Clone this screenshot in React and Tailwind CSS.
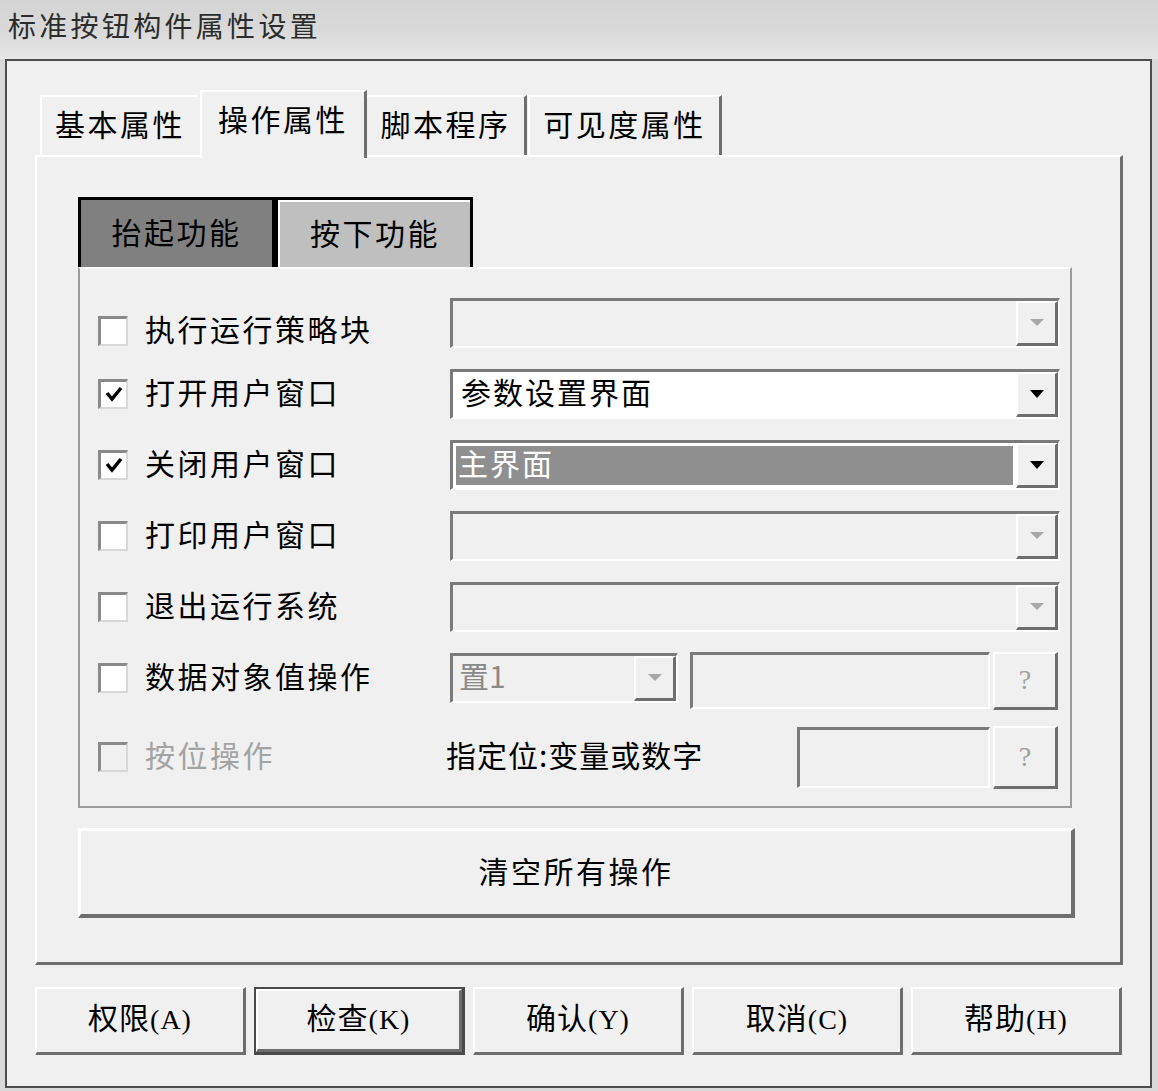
import React from "react";

const RAISED =
  "border-t-2 border-l-2 border-t-white border-l-white border-r-[3px] border-b-[3px] border-r-[#6e6e6e] border-b-[#6e6e6e]";
const SUNKEN =
  "border-t-[3px] border-l-[3px] border-t-[#7a7a7a] border-l-[#7a7a7a] border-r-2 border-b-2 border-r-white border-b-white";
const T = "text-[30px] leading-none relative -top-[3px]";

function Arrow({ disabled }) {
  return (
    <div className={`w-[42px] h-full bg-[#f0f0f0] flex items-center justify-center ${RAISED}`}>
      <svg width="16" height="10" viewBox="0 0 16 10">
        {disabled ? (
          <polygon points="1,1 15,1 8,8" fill="#a8a8a8" />
        ) : (
          <polygon points="1,1 15,1 8,9" fill="#000" />
        )}
      </svg>
    </div>
  );
}

function Checkbox({ checked, disabled }) {
  return (
    <div
      className={`w-[30px] h-[30px] shrink-0 flex items-center justify-center border-t-[3px] border-l-[3px] border-t-[#8a8a8a] border-l-[#8a8a8a] border-r-2 border-b-2 border-r-[#d8d8d8] border-b-[#d8d8d8] ${
        disabled ? "bg-[#f0f0f0]" : "bg-white"
      }`}
    >
      {checked && (
        <svg width="20" height="18" viewBox="0 0 20 18">
          <polyline points="3,8 8,14 17,3" fill="none" stroke="#000" strokeWidth="3.5" />
        </svg>
      )}
    </div>
  );
}

function Combo({ variant, value }) {
  return (
    <div className={`w-[610px] h-[50px] flex ${SUNKEN} ${variant === "disabled" ? "bg-[#f0f0f0]" : "bg-white"}`}>
      <div className="flex-1 h-full flex items-center">
        {variant === "white" && <span className={`pl-[8px] tracking-[2px] text-black ${T}`}>{value}</span>}
        {variant === "selected" && (
          <div className="w-full h-full p-[3px]">
            <div className="w-full h-full bg-[#8f8f8f] flex items-center">
              <span className={`pl-[2px] tracking-[2px] text-white ${T}`}>{value}</span>
            </div>
          </div>
        )}
      </div>
      <Arrow disabled={variant === "disabled"} />
    </div>
  );
}

function QButton({ h }) {
  return (
    <div
      className={`w-[65px] ${h} bg-[#f0f0f0] flex items-center justify-center ${RAISED} text-[#a0a0a0] text-[28px] font-['Liberation_Serif',serif]`}
    >
      ?
    </div>
  );
}

function Row({ checked, label, disabled, children, h = "h-[71px]", leftClass = "" }) {
  return (
    <div className={`flex items-center ${h}`}>
      <div className={`w-[352px] flex items-center gap-[17px] ${leftClass}`}>
        <Checkbox checked={checked} disabled={disabled} />
        <span className={`tracking-[2.5px] ${T} ${disabled ? "text-[#a3a3a3]" : "text-black"}`}>{label}</span>
      </div>
      <div className="flex items-center">{children}</div>
    </div>
  );
}

function BLabel({ label }) {
  const [cn, rest] = [label.slice(0, 2), label.slice(2)];
  return (
    <span className={`tracking-[1px] text-black ${T}`}>
      {cn}
      <span className="font-['Liberation_Serif',serif] text-[28px]">{rest}</span>
    </span>
  );
}

function BottomButton({ label, isDefault }) {
  if (isDefault) {
    return (
      <div className="w-[211px] h-[68px] border-2 border-[#4a4a4a] border-r-[3px] border-b-[3px]">
        <div className={`w-full h-full bg-[#f0f0f0] flex items-center justify-center ${RAISED}`}>
          <BLabel label={label} />
        </div>
      </div>
    );
  }
  return (
    <div className={`w-[211px] h-[68px] bg-[#f0f0f0] flex items-center justify-center ${RAISED}`}>
      <BLabel label={label} />
    </div>
  );
}

export default function App() {
  return (
    <div className="w-[1158px] h-[1091px] bg-[#d9d9d9] overflow-hidden font-['Noto_Sans_CJK_SC','Noto_Sans',sans-serif]">
      {/* Title bar */}
      <div className="h-[57px] bg-gradient-to-b from-[#d4d4d4] via-[#d9d9d9] to-[#e4e4e4] flex items-center pl-[8px] pb-[8px]">
        <span className="text-[28px] leading-none tracking-[3.3px] text-[#2c2c2c]">标准按钮构件属性设置</span>
      </div>
      <div className="h-[2px] bg-[#e6e6e6]" />
      {/* Dialog frame */}
      <div className="ml-[5px] w-[1147px] h-[1029px] border-2 border-[#4d4d4d] bg-[#f0f0f0] pt-[29px] pl-[28px]">
        {/* Tab header */}
        <div className="w-[1088px] h-[65px] flex items-end relative z-10">
          <div className="ml-[5px] w-[158px] h-[60px] flex items-center justify-center border-t-2 border-l-2 border-white">
            <span className={`tracking-[2.5px] text-black ${T}`}>基本属性</span>
          </div>
          <div className="ml-[2px] w-[167px] h-[68px] -mb-[3px] bg-[#f0f0f0] flex items-start justify-center pt-[14px] border-t-2 border-l-2 border-white border-r-[3px] border-r-[#6e6e6e]">
            <span className={`tracking-[2.5px] text-black ${T}`}>操作属性</span>
          </div>
          <div className="w-[160px] h-[60px] flex items-center justify-center border-t-2 border-t-white border-r-[3px] border-r-[#6e6e6e]">
            <span className={`tracking-[2.5px] text-black ${T}`}>脚本程序</span>
          </div>
          <div className="ml-[1px] w-[194px] h-[60px] flex items-center justify-center border-t-2 border-l-2 border-white border-r-[3px] border-r-[#6e6e6e]">
            <span className={`tracking-[2.5px] text-black ${T}`}>可见度属性</span>
          </div>
        </div>
        {/* Tab panel */}
        <div className="w-[1088px] h-[810px] border-t-2 border-l-2 border-t-white border-l-white border-r-[3px] border-b-[3px] border-r-[#6e6e6e] border-b-[#6e6e6e] pt-[40px] pl-[41px]">
          {/* Inner tabs */}
          <div className="flex h-[70px]">
            <div className="w-[197px] h-full bg-[#808080] border-t-[3px] border-l-[3px] border-r-[3px] border-black flex items-center justify-center">
              <span className={`tracking-[2.5px] text-black ${T}`}>抬起功能</span>
            </div>
            <div className="w-[198px] h-full border-t-[3px] border-l-[3px] border-r-[3px] border-black">
              <div className="w-full h-full bg-[#bfbfbf] border-t-2 border-l-2 border-white flex items-center justify-center">
                <span className={`tracking-[2.5px] text-black ${T}`}>按下功能</span>
              </div>
            </div>
          </div>
          {/* Inner panel */}
          <div className="w-[994px] h-[541px] border-2 border-[#9c9c9c] border-t-[#fbfbfb] pt-[18px] pl-[18px]">
            <Row label="执行运行策略块" leftClass="mt-[16px]">
              <Combo variant="disabled" />
            </Row>
            <Row label="打开用户窗口" checked>
              <Combo variant="white" value="参数设置界面" />
            </Row>
            <Row label="关闭用户窗口" checked>
              <Combo variant="selected" value="主界面" />
            </Row>
            <Row label="打印用户窗口">
              <Combo variant="disabled" />
            </Row>
            <Row label="退出运行系统">
              <Combo variant="disabled" />
            </Row>
            <Row label="数据对象值操作">
              <div className={`w-[228px] h-[50px] flex bg-[#f0f0f0] ${SUNKEN}`}>
                <div className="flex-1 flex items-center">
                  <span className={`pl-[6px] text-[#8a8a8a] ${T}`}>置1</span>
                </div>
                <Arrow disabled />
              </div>
              <div className={`ml-[12px] mt-[6px] w-[300px] h-[57px] bg-[#f0f0f0] ${SUNKEN}`} />
              <div className="ml-[3px] mt-[6px]">
                <QButton h="h-[58px]" />
              </div>
            </Row>
            <Row label="按位操作" disabled h="h-[88px]">
              <div className="w-[612px] -ml-[4px] flex items-center">
                <span className={`tracking-[1px] text-black ${T}`}>指定位:变量或数字</span>
                <div className="ml-auto flex items-center">
                  <div className={`w-[193px] h-[61px] bg-[#f0f0f0] ${SUNKEN}`} />
                  <div className="ml-[3px]">
                    <QButton h="h-[63px]" />
                  </div>
                </div>
              </div>
            </Row>
          </div>
          {/* Clear button */}
          <div className="mt-[20px] w-[997px] h-[90px] bg-[#f0f0f0] flex items-center justify-center border-t-[3px] border-l-[3px] border-t-white border-l-white border-r-[4px] border-b-[4px] border-r-[#6e6e6e] border-b-[#6e6e6e]">
            <span className={`tracking-[2.5px] text-black ${T}`}>清空所有操作</span>
          </div>
        </div>
        {/* Bottom buttons */}
        <div className="mt-[22px] flex gap-[8px]">
          <BottomButton label="权限(A)" />
          <BottomButton label="检查(K)" isDefault />
          <BottomButton label="确认(Y)" />
          <BottomButton label="取消(C)" />
          <BottomButton label="帮助(H)" />
        </div>
      </div>
    </div>
  );
}
